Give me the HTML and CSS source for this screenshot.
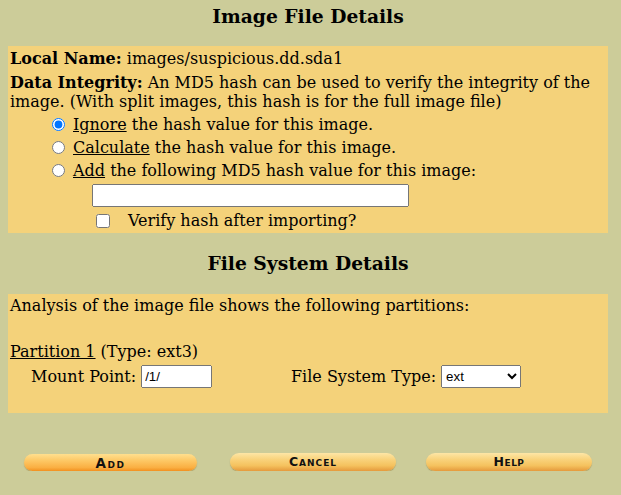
FILE: index.html
```html
<!DOCTYPE html>
<html lang="en">
<head>
<meta charset="utf-8">
<title>Image File Details</title>
<link rel="stylesheet" href="styles.css">
</head>
<body>
<main class="page">
  <h1 class="title">Image File Details</h1>
  <section class="panel panel-image">
    <p class="line"><b>Local Name:</b> images/suspicious.dd.sda1</p>
    <p class="line line-integrity"><b>Data Integrity:</b> An MD5 hash can be used to verify the integrity of the image. (With split images, this hash is for the full image file)</p>
    <div class="options">
      <label class="opt"><input type="radio" name="md5" checked><span><u>Ignore</u> the hash value for this image.</span></label>
      <label class="opt"><input type="radio" name="md5"><span><u>Calculate</u> the hash value for this image.</span></label>
      <label class="opt"><input type="radio" name="md5"><span><u>Add</u> the following MD5 hash value for this image:</span></label>
    </div>
    <input class="hash-input" type="text" aria-label="MD5 hash">
    <label class="verify"><input type="checkbox"><span>Verify hash after importing?</span></label>
  </section>
  <h1 class="title title-fs">File System Details</h1>
  <section class="panel panel-fs">
    <p class="line">Analysis of the image file shows the following partitions:</p>
    <p class="line partition"><u>Partition 1</u> (Type: ext3)</p>
    <div class="mount-row">
      <label class="field">Mount Point: <input class="mount-input" type="text" value="/1/"></label>
      <label class="field">File System Type: <select class="fs-select"><option>ext</option></select></label>
    </div>
  </section>
  <div class="buttons">
    <button class="btn btn-add" type="button">Add</button>
    <button class="btn btn-cancel" type="button">Cancel</button>
    <button class="btn btn-help" type="button">Help</button>
  </div>
</main>
</body>
</html>
```
FILE: styles.css
```css
* { box-sizing: border-box; }
html, body { margin: 0; }
body {
  background: #cccc99;
  font-family: "DejaVu Serif", serif;
  font-size: 16px;
  line-height: 19px;
  color: #000;
}
.page { width: 600px; margin-left: 8px; padding-top: 5px; }
.title {
  font-size: 18.7px;
  line-height: 22px;
  font-weight: bold;
  text-align: center;
  margin: 0 0 19px;
}
.title-fs { margin-top: 19px; margin-bottom: 20px; }
.panel { background: #f4d27a; padding: 3px 2px 1px; }
.line { margin: 0; }
.line-integrity { margin-top: 5px; }
.options { margin-top: 2px; padding-left: 42px; }
.opt { display: flex; align-items: center; height: 23px; gap: 8px; }
.opt input { margin: 0; width: 13px; height: 13px; }
.hash-input {
  display: block;
  margin: 2px 0 0 82px;
  width: 317px;
  height: 23px;
}
.verify {
  display: flex;
  align-items: center;
  height: 23px;
  margin-top: 2px;
  padding-left: 86px;
  gap: 18px;
}
.verify input { margin: 0; width: 14px; height: 14px; }
.panel-fs { padding: 2px 2px 25px; }
.partition { margin-top: 27px; }
.mount-row {
  display: grid;
  grid-template-columns: 260px auto;
  margin-top: 4px;
  padding-left: 21px;
  height: 23px;
}
.field { display: flex; align-items: center; gap: 5px; }
.mount-input, .fs-select {
  height: 23px;
  margin: 0;
  font-family: "Liberation Sans", sans-serif;
  font-size: 13.33px;
}
.mount-input { width: 71px; }
.fs-select { width: 80px; }
.buttons { display: flex; align-items: flex-start; margin-top: 40px; padding-left: 16px; }
.btn {
  height: 18px;
  padding: 0;
  border: 0;
  border-radius: 9px;
  font-family: "DejaVu Sans", sans-serif;
  font-size: 12.5px;
  font-weight: bold;
  font-variant: small-caps;
  letter-spacing: 1px;
  line-height: 18px;
  color: #111;
  background: linear-gradient(#fde6a6 0%, #f9d37c 35%, #f5c25e 70%, #e59a3c 100%);
  box-shadow: 0 1px 1px rgba(120, 80, 0, 0.35);
}
.btn-add {
  width: 173px;
  height: 17px;
  margin-top: 1px;
  margin-right: 33px;
  font-size: 13.5px;
  letter-spacing: 1.5px;
  line-height: 16px;
  background: linear-gradient(#ffdf8e 0%, #fdc764 40%, #faaf42 80%, #f2901f 100%);
}
.btn-cancel { width: 166px; margin-right: 30px; }
.btn-help { width: 166px; letter-spacing: 0.5px; }
```
